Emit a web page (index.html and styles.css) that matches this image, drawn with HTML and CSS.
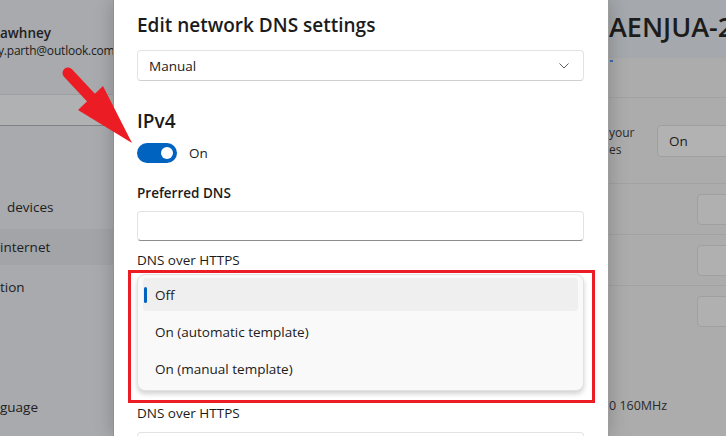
FILE: index.html
```html
<!DOCTYPE html>
<html lang="en">
<head>
<meta charset="utf-8">
<title>Edit network DNS settings</title>
<link rel="stylesheet" href="styles.css">
</head>
<body>
<div class="screen">
  <aside class="sidebar">
    <div class="profile">
      <div class="name">awhney</div>
      <div class="email">y.parth@outlook.com</div>
    </div>
    <div class="search"></div>
    <nav class="nav">
      <div class="nav-item nav-dev">devices</div>
      <div class="nav-item active">internet</div>
      <div class="nav-item">tion</div>
      <div class="nav-item"></div>
      <div class="nav-item"></div>
      <div class="nav-item">guage</div>
    </nav>
  </aside>

  <section class="dialog">
    <h1 class="title">Edit network DNS settings</h1>
    <div class="select">
      <span>Manual</span>
      <svg class="chev" width="10" height="6" viewBox="0 0 10 6"><path d="M0.5 0.5 L5 5 L9.5 0.5" fill="none" stroke="#5c5c5c" stroke-width="1"/></svg>
    </div>
    <h2 class="section">IPv4</h2>
    <div class="toggle-row">
      <span class="toggle"><span class="knob"></span></span>
      <span>On</span>
    </div>
    <div class="label strong">Preferred DNS</div>
    <div class="input"></div>
    <div class="label">DNS over HTTPS</div>
    <div class="popup">
      <div class="option selected">Off</div>
      <div class="option">On (automatic template)</div>
      <div class="option">On (manual template)</div>
    </div>
    <div class="label label-low">DNS over HTTPS</div>
    <div class="input"></div>
  </section>

  <section class="pane">
    <div class="pane-head">AENJUA-2</div>
    <div class="pane-row row-top"><span class="blue-mark"></span></div>
    <div class="pane-row row-mid">
      <div class="desc"><div>your</div><div>es</div></div>
      <div class="pane-select">On</div>
    </div>
    <div class="pane-row row-box"><div class="pane-box"></div></div>
    <div class="pane-row row-box"><div class="pane-box"></div></div>
    <div class="pane-row row-box last"><div class="pane-box"></div></div>
    <div class="pane-foot">0 160MHz</div>
  </section>

  <svg class="arrow" width="726" height="436" viewBox="0 0 726 436">
    <line x1="68" y1="73" x2="96" y2="103" stroke="#ec1c24" stroke-width="11" stroke-linecap="round"/>
    <polygon points="78,110 103,86 132,143" fill="#ec1c24"/>
  </svg>
  <div class="callout"></div>
</div>
</body>
</html>
```

FILE: styles.css
```css
* { box-sizing: border-box; }

body {
  margin: 0;
  font-family: "Open Sans", "Noto Sans", sans-serif;
}

.screen {
  position: relative;
  width: 726px;
  height: 436px;
  overflow: hidden;
  display: flex;
  background: #a9abae;
  color: #202020;
  font-size: 13px;
}

/* ---------- left settings sidebar (dimmed) ---------- */
.sidebar {
  width: 113px;
  flex: none;
  background: #a8aaad;
  overflow: hidden;
  white-space: nowrap;
}

.profile {
  padding-top: 24px;
}

.name {
  font-weight: 600;
  font-size: 13.5px;
  line-height: 18px;
}

.email {
  font-size: 12px;
  line-height: 18px;
  letter-spacing: -0.2px;
  text-indent: -2px;
}

.search {
  margin-top: 34px;
  height: 32px;
  background: #afb1b3;
  border-top: 1px solid #9c9ea1;
  border-bottom: 1px solid #7f8184;
}

.nav {
  margin-top: 63px;
  display: flex;
  flex-direction: column;
  gap: 4px;
}

.nav-item {
  height: 36px;
  line-height: 36px;
  font-size: 13.5px;
}

.nav-dev { padding-left: 7px; }

.nav-item.active {
  background: #a2a4a7;
}

/* ---------- dialog ---------- */
.dialog {
  position: relative;
  z-index: 1;
  width: 496px;
  flex: none;
  background: #ffffff;
  border-left: 1px solid #8f9194;
  border-right: 1px solid #9c9c9c;
  padding: 11px 24px 0 23px;
  box-shadow: 0 0 18px rgba(0, 0, 0, 0.22);
  color: #1b1b1b;
}

.title {
  margin: 0;
  font-size: 19px;
  font-weight: 600;
  line-height: 28px;
}

.select {
  margin-top: 11px;
  height: 31px;
  border: 1px solid #e3e3e3;
  border-bottom-color: #cfcfcf;
  border-radius: 4px;
  display: flex;
  align-items: center;
  justify-content: space-between;
  padding: 0 14px 0 11px;
  font-size: 13.5px;
}

.section {
  margin: 26px 0 0;
  font-size: 19px;
  font-weight: 600;
  line-height: 28px;
}

.toggle-row {
  margin-top: 8px;
  height: 20px;
  display: flex;
  align-items: center;
  gap: 12px;
  font-size: 13.5px;
}

.toggle {
  width: 40px;
  height: 20px;
  border-radius: 10px;
  background: #0063bf;
  display: flex;
  align-items: center;
  justify-content: flex-end;
  padding-right: 4px;
}

.knob {
  width: 12px;
  height: 12px;
  border-radius: 50%;
  background: #ffffff;
}

.label {
  margin-top: 9px;
  line-height: 20px;
  font-size: 13.5px;
}

.label.strong {
  margin-top: 20px;
  font-weight: 600;
}

.label-low {
  margin-top: 12px;
}

.input {
  margin-top: 8px;
  height: 30px;
  border: 1px solid #e3e3e3;
  border-bottom-color: #8d8d8d;
  border-radius: 4px;
}

.label-low + .input {
  margin-top: 9px;
}

.popup {
  margin-top: 4px;
  height: 117px;
  background: #f9f9f9;
  border: 1px solid #e2e2e2;
  border-radius: 8px;
  padding: 3px 5px 0 5px;
  display: flex;
  flex-direction: column;
  gap: 4px;
  box-shadow: 0 3px 5px rgba(0, 0, 0, 0.18);
}

.option {
  height: 33px;
  display: flex;
  align-items: center;
  padding-left: 12px;
  font-size: 13.5px;
  border-radius: 4px;
}

.option.selected {
  background: #efefef;
  padding-left: 1px;
}

.option.selected::before {
  content: "";
  width: 3px;
  height: 16px;
  border-radius: 2px;
  background: #0063bf;
  margin-right: 8px;
}

/* ---------- right settings pane (dimmed) ---------- */
.pane {
  flex: 1;
  min-width: 0;
  overflow: hidden;
  white-space: nowrap;
  background: #acacac;
  display: flex;
  flex-direction: column;
}

.pane-head {
  height: 58px;
  flex: none;
  background: #a5a8ac;
  font-size: 27px;
  font-weight: 600;
  line-height: 54px;
  color: #1c1c1c;
}

.pane-row {
  flex: none;
  border-bottom: 1px solid #a2a2a2;
  display: flex;
  align-items: center;
}

.row-top {
  height: 40px;
  align-items: flex-start;
}

.blue-mark {
  margin: 2px 0 0 1px;
  width: 3px;
  height: 2px;
  background: #3a6eb0;
}

.row-mid {
  height: 86px;
}

.desc {
  width: 48px;
  flex: none;
  overflow: hidden;
  font-size: 12px;
  line-height: 17px;
  color: #2a2a2a;
}

.pane-select {
  width: 90px;
  flex: none;
  height: 32px;
  border: 1px solid #9f9f9f;
  border-radius: 4px;
  background: #b2b2b2;
  padding-left: 11px;
  line-height: 30px;
  font-size: 13.5px;
}

.row-box {
  height: 51px;
}

.row-box.last {
  border-bottom: none;
}

.pane-box {
  margin-left: 88px;
  width: 40px;
  flex: none;
  height: 31px;
  border: 1px solid #a0a0a0;
  border-radius: 4px;
  background: #b0b0b0;
}

.pane-foot {
  margin-top: 60px;
  font-size: 12.5px;
  line-height: 18px;
  color: #2a2a2a;
}

/* ---------- annotations ---------- */
.arrow {
  position: absolute;
  left: 0;
  top: 0;
  z-index: 5;
  pointer-events: none;
}

.callout {
  position: absolute;
  left: 128px;
  top: 270px;
  width: 467px;
  height: 133px;
  border: 3px solid #ec1c24;
  z-index: 5;
}
```
